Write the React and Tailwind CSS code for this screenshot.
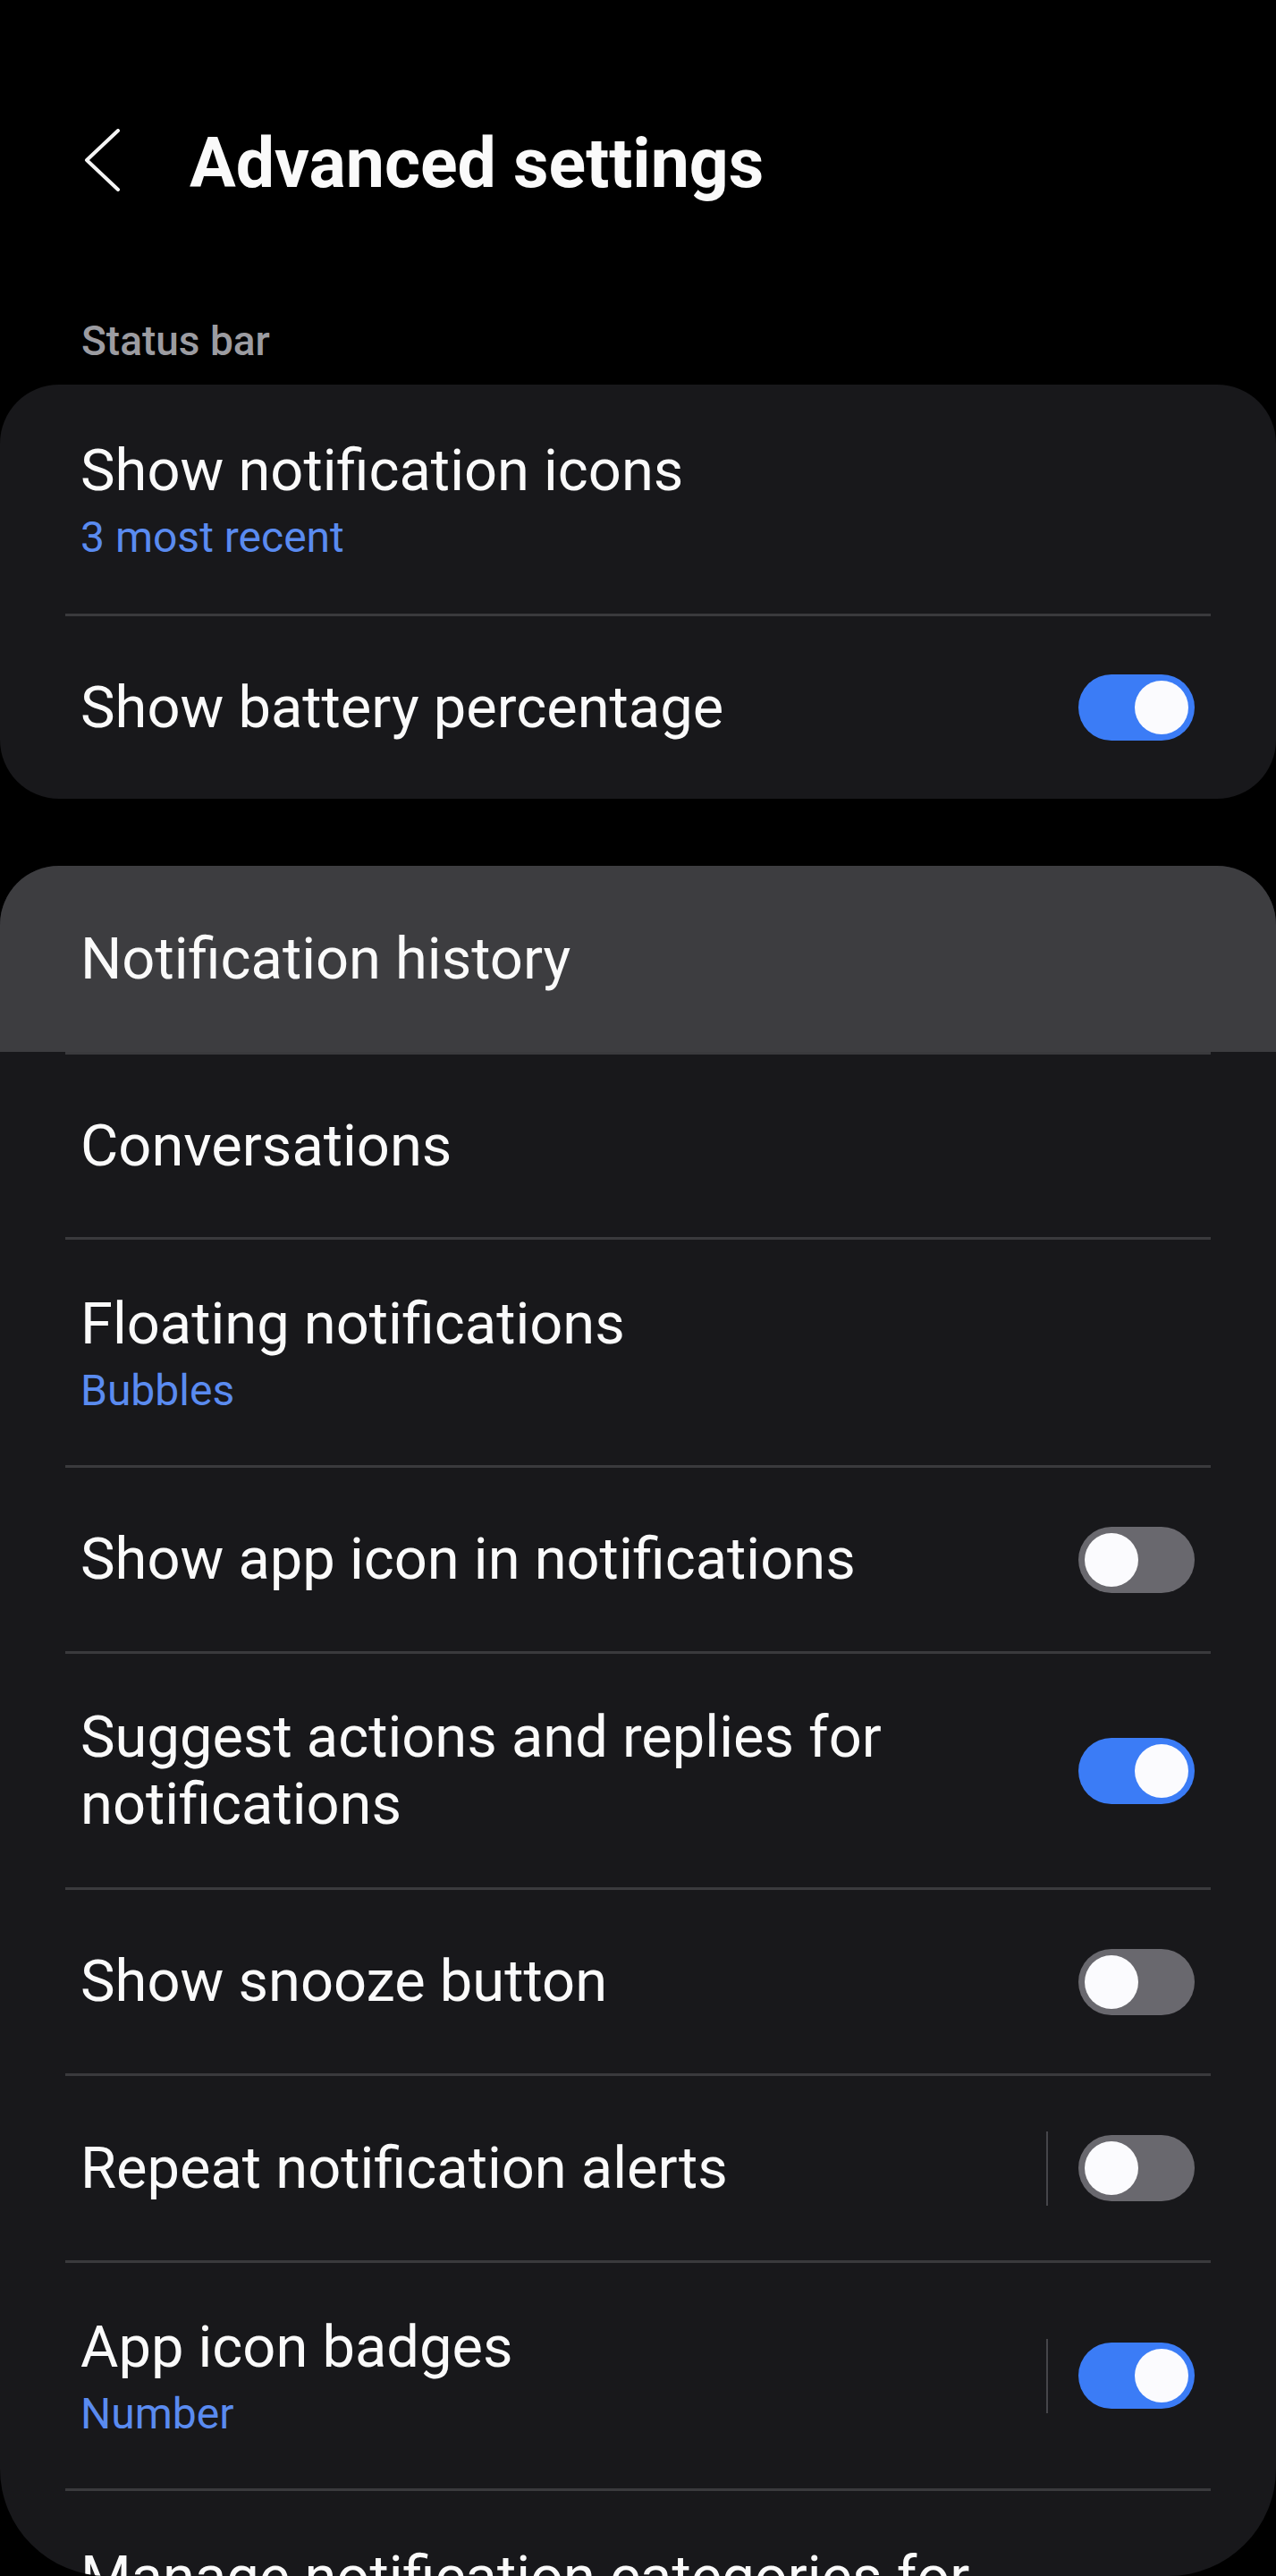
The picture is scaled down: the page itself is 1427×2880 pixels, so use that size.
import React from "react";

const font = { fontFamily: "Roboto, 'Noto Sans', sans-serif" };

function Toggle({ on }) {
  return (
    <div
      className={`relative h-[74px] w-[130px] shrink-0 rounded-full ${
        on ? "bg-[#3b7cf6]" : "bg-[#69686e]"
      }`}
    >
      <div
        className={`absolute top-[7px] h-[60px] w-[60px] rounded-full bg-[#fbfbfe] ${
          on ? "right-[7px]" : "left-[7px]"
        }`}
      />
    </div>
  );
}

function Divider() {
  return <div className="mx-[73px] h-[3px] bg-[#3a3a3d]" />;
}

function Row({ title, sub, toggle, split, height }) {
  return (
    <div className={`flex items-center pl-[90px] pr-[91px] ${height}`}>
      <div className="flex min-w-0 flex-1 flex-col pr-[60px]">
        <div className="text-[65px] leading-[75px] text-[#fafafa]">{title}</div>
        {sub && (
          <div className="mt-[9px] text-[48px] leading-[55px] text-[#5a8bf0]">{sub}</div>
        )}
      </div>
      {toggle !== undefined && (
        <div className="flex items-center">
          {split && <div className="mr-[34px] h-[83px] w-[2px] bg-[#45454a]" />}
          <Toggle on={toggle} />
        </div>
      )}
    </div>
  );
}

export default function App() {
  return (
    <div className="h-[2880px] w-full overflow-hidden bg-black" style={font}>
      {/* Top bar */}
      <div className="mt-[144px] flex h-[78px] items-start">
        <svg
          className="ml-[94px] mr-[76px] shrink-0"
          width="42"
          height="70"
          viewBox="0 0 42 70"
          fill="none"
        >
          <polyline
            points="38,2 3,35 38,68"
            stroke="#f5f5f5"
            strokeWidth="4"
            strokeLinecap="round"
            strokeLinejoin="round"
          />
        </svg>
        <h1 className="text-[77px] font-bold leading-[78px] text-[#fafafa]">Advanced settings</h1>
      </div>

      {/* Status bar section */}
      <div className="mt-[136px] pl-[91px] text-[46px] font-medium leading-[46px] text-[#9c9ca1]">
        Status bar
      </div>
      <div className="mt-[26px] rounded-[66px] bg-[#18181b]">
        <Row title="Show notification icons" sub="3 most recent" height="h-[256px]" />
        <Divider />
        <Row title="Show battery percentage" toggle={true} height="h-[204px]" />
      </div>

      {/* Notifications section */}
      <div className="mt-[75px] overflow-hidden rounded-t-[66px] rounded-b-[120px] bg-[#18181b]">
        <div className="flex h-[208px] items-center bg-[#3d3d40] pl-[90px]">
          <div className="text-[65px] leading-[75px] text-[#fafafa]">Notification history</div>
        </div>
        <Divider />
        <Row title="Conversations" height="h-[204px]" />
        <Divider />
        <Row title="Floating notifications" sub="Bubbles" height="h-[252px]" />
        <Divider />
        <Row title="Show app icon in notifications" toggle={false} height="h-[205px]" />
        <Divider />
        <Row title="Suggest actions and replies for notifications" toggle={true} height="h-[261px]" />
        <Divider />
        <Row title="Show snooze button" toggle={false} height="h-[205px]" />
        <Divider />
        <Row title="Repeat notification alerts" toggle={false} split height="h-[206px]" />
        <Divider />
        <Row title="App icon badges" sub="Number" toggle={true} split height="h-[252px]" />
        <Divider />
        <div className="h-[95px] overflow-hidden pl-[90px] pr-[300px] pt-[59px]">
          <div className="text-[65px] leading-[75px] text-[#fafafa]">
            Manage notification categories for each app
          </div>
        </div>
      </div>
    </div>
  );
}
